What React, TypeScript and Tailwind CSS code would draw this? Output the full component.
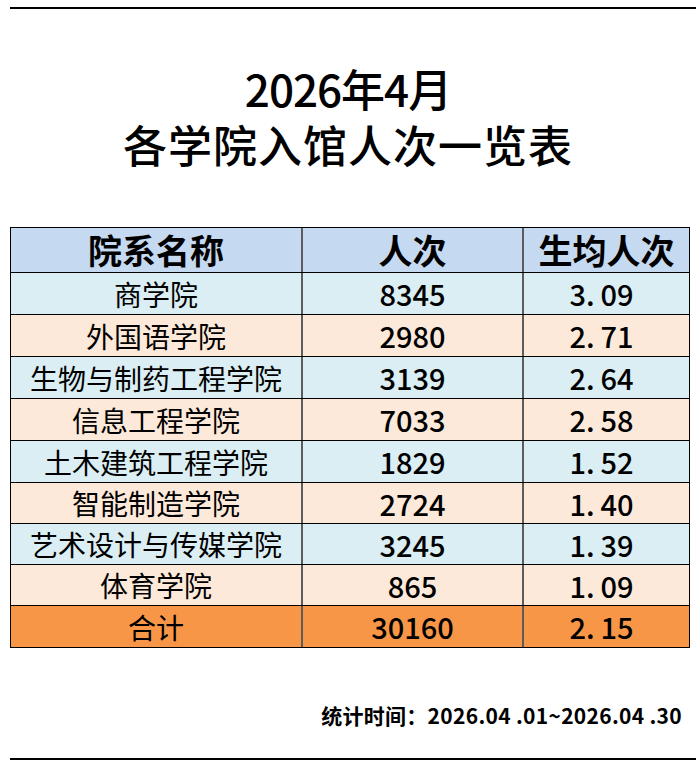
const rows = [
  { name: "商学院", count: "8345", avg: "3.09" },
  { name: "外国语学院", count: "2980", avg: "2.71" },
  { name: "生物与制药工程学院", count: "3139", avg: "2.64" },
  { name: "信息工程学院", count: "7033", avg: "2.58" },
  { name: "土木建筑工程学院", count: "1829", avg: "1.52" },
  { name: "智能制造学院", count: "2724", avg: "1.40" },
  { name: "艺术设计与传媒学院", count: "3245", avg: "1.39" },
  { name: "体育学院", count: "865", avg: "1.09" },
];

const heights = ["h-[42px]", "h-[42px]", "h-[42px]", "h-[42px]", "h-[42px]", "h-[41px]", "h-[41px]", "h-[41px]"];

const Avg = ({ value }: { value: string }) => {
  const [a, b] = value.split(".");
  return (
    <span className="font-medium text-[29px] -translate-x-[5px]">
      {a}.<span className="ml-[6px]">{b}</span>
    </span>
  );
};

const Cell = ({ children, last }: { children: React.ReactNode; last?: boolean }) => (
  <div
    className={`flex items-center justify-center ${last ? "" : "border-r-2 border-[#5c5c5c]"}`}
  >
    {children}
  </div>
);

const Num = ({ children }: { children: React.ReactNode }) => (
  <span className="font-medium text-[29px]">{children}</span>
);

export default function App() {
  return (
    <div
      className="w-[696px] h-[767px] bg-white text-black overflow-hidden"
      style={{ fontFamily: '"Noto Sans CJK SC", "Noto Sans", sans-serif' }}
    >
      <div className="h-[7px]" />
      <div className="ml-[10px] h-[2px] bg-black" />

      <div className="mt-[57px] flex flex-col items-center gap-[12px] text-[44px] leading-[44px] font-medium">
        <div className="tracking-[-1px]">2026年4月</div>
        <div className="tracking-[1px]">各学院入馆人次一览表</div>
      </div>

      <div className="mt-[61px] ml-[10px] w-[680px] border border-black">
        <div className="grid grid-cols-[292px_221px_165px] h-[45px] bg-[#c5d9f1] border-b border-black text-[34px] font-bold leading-none">
          <Cell>院系名称</Cell>
          <Cell>人次</Cell>
          <Cell last>生均人次</Cell>
        </div>
        {rows.map((r, i) => (
          <div
            key={r.name}
            className={`grid grid-cols-[292px_221px_165px] ${heights[i]} border-b border-black text-[28px] leading-none ${
              i % 2 === 0 ? "bg-[#daeef3]" : "bg-[#fde9d9]"
            }`}
          >
            <Cell>{r.name}</Cell>
            <Cell>
              <Num>{r.count}</Num>
            </Cell>
            <Cell last>
              <Avg value={r.avg} />
            </Cell>
          </div>
        ))}
        <div className="grid grid-cols-[292px_221px_165px] h-[41px] bg-[#f79646] text-[28px] leading-none">
          <Cell>合计</Cell>
          <Cell>
            <Num>30160</Num>
          </Cell>
          <Cell last>
            <Avg value="2.15" />
          </Cell>
        </div>
      </div>

      <div className="mt-[55px] pr-[14px] text-right text-[21px] leading-[24px] tracking-[0.3px] font-bold">
        统计时间：2026.04 .01~2026.04 .30
      </div>

      <div className="mt-[31px] ml-[10px] h-[2px] bg-black" />
    </div>
  );
}
